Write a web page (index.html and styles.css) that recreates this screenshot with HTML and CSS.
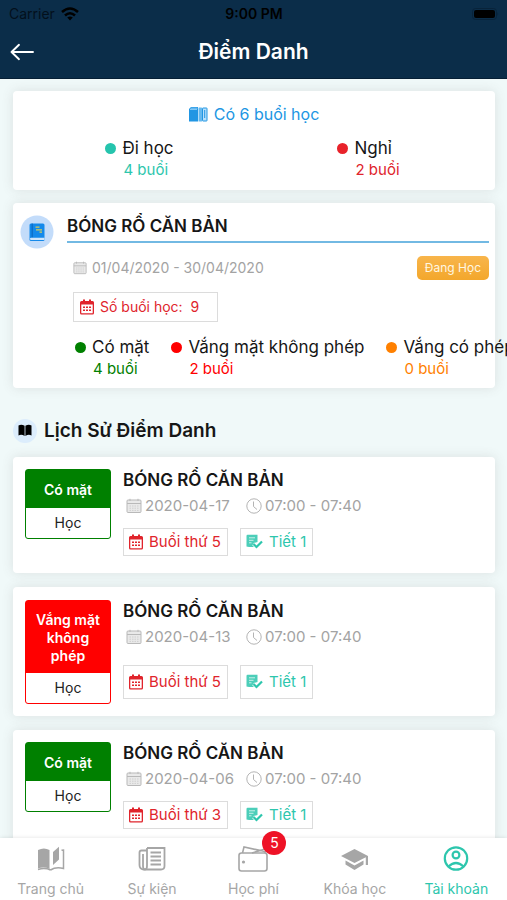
FILE: index.html
```html
<!DOCTYPE html>
<html lang="vi">
<head>
<meta charset="utf-8">
<meta name="viewport" content="width=device-width, initial-scale=1">
<title>Điểm Danh</title>
<link rel="stylesheet" href="styles.css">
</head>
<body>
<svg class="sprite" aria-hidden="true">
  <symbol id="calendar" viewBox="0 0 16 16">
    <rect x="1" y="2" width="14" height="12.500" rx="1" fill="#e9e9e9" stroke="#b9b9b9"/>
    <path d="M1 5.500H15" stroke="#b9b9b9"/>
    <path d="M4 .8V3M12 .8V3" stroke="#b9b9b9"/>
    <path d="M3.500 8H13M3.500 10.200H13M3.500 12.400H13" stroke="#cfcfcf" stroke-dasharray="1.500 1"/>
  </symbol>
  <symbol id="clock" viewBox="0 0 16 16">
    <circle cx="8" cy="8" r="7.200" fill="none" stroke="#b4b4b4"/>
    <path d="M7.500 3.500V8.500L11 11.500" fill="none" stroke="#b4b4b4"/>
  </symbol>
  <symbol id="sessions" viewBox="0 0 14 16">
    <path fill="currentColor" fill-rule="evenodd" d="M1.500 2H3V.5H5V2H9V.5H11V2H12.500Q14 2 14 3.500V14Q14 15.500 12.500 15.500H1.500Q0 15.500 0 14V3.500Q0 2 1.500 2ZM1.300 5.500V13.700Q1.300 14.200 1.800 14.200H12.200Q12.700 14.200 12.700 13.700V5.500Z"/>
    <path stroke="currentColor" stroke-width="1.600" stroke-dasharray="2 1" d="M3 8.300H11M3 11.300H11"/>
  </symbol>
  <symbol id="lesson" viewBox="0 0 17 16">
    <path fill="currentColor" d="M1.500 .8H11.500V8L7.500 9L9 13H3L.5 12.500V2Q.5 .8 1.500 .8Z" opacity=".85"/>
    <path d="M3 3.800H9M3 6.300H7.500M3 8.800H5.500" stroke="#fff" stroke-width=".7"/>
    <path d="M7.500 10L10.500 13L16 7.500" fill="none" stroke="#fff" stroke-width="3.600"/>
    <path d="M7.500 10L10.500 13L16 7.500" fill="none" stroke="currentColor" stroke-width="2.200"/>
  </symbol>
</svg>

<header class="header">
  <div class="status">
    <span class="carrier">Carrier
      <svg width="18" height="14" viewBox="0 0 18 14"><g fill="none" stroke="#000" stroke-width="2.600"><path d="M1 5Q9-2 17 5"/><path d="M4 8.500Q9 4 14 8.500"/></g><path d="M6.200 10.600Q9 8.200 11.800 10.600L9 13.500Z"/></svg>
    </span>
    <span class="time">9:00 PM</span>
    <svg class="battery" width="27" height="12" viewBox="0 0 27 12"><rect x=".5" y=".5" width="24" height="11" rx="3" fill="none" stroke="#08233a"/><rect x="2" y="2" width="21" height="8" rx="2"/><path d="M25.500 4Q27 6 25.500 8Z" fill="#08233a"/></svg>
  </div>
  <div class="bar">
    <button class="back" type="button" aria-label="Quay lại"><svg width="24" height="18" viewBox="0 0 24 18"><path d="M23 9H1.500M9 1.800L1.500 9L9 16.200" fill="none" stroke="#fff" stroke-width="1.900" stroke-linecap="round" stroke-linejoin="round"/></svg></button>
    <h1>Điểm Danh</h1>
  </div>
</header>

<main class="content">
  <section class="card summary">
    <h2 class="summary-title">
      <svg width="19" height="15" viewBox="0 0 19 15"><path d="M0 2L2 0H9V14.500H0Z" fill="#2196e3"/><path d="M1 2.500H8M1.500 1.200H8.500" stroke="#9bd3fa" stroke-width=".8"/><rect x="9.500" y=".5" width="3.500" height="14" rx=".5" fill="#65b9ef"/><rect x="13.500" y="1" width="4.500" height="13" rx=".5" fill="#b9e0fb" stroke="#2196e3"/><path d="M15.700 3V11" stroke="#2196e3"/></svg>
      Có 6 buổi học
    </h2>
    <div class="halves">
      <div class="stat teal"><span class="label">Đi học</span><span class="count">4 buổi</span></div>
      <div class="stat crimson"><span class="label">Nghỉ</span><span class="count">2 buổi</span></div>
    </div>
  </section>

  <section class="card course">
    <svg class="course-icon" width="34" height="34" viewBox="0 0 34 34"><circle cx="17" cy="17" r="16.500" fill="#c3dcfa"/><rect x="9.500" y="8.500" width="15" height="17.500" rx="1.500" fill="#1489ea"/><path d="M12.200 8.500V22.500" stroke="#0b66bb"/><path d="M11 22.700H24.500V25H11Q9.800 24.600 9.800 23.800Q9.800 23 11 22.700Z" fill="#cfe5fb"/><path d="M15.500 12.200H19.500M16 14.800H22M19.500 17.200H22" stroke="#d5cd58" stroke-width="1.300"/></svg>
    <div class="course-body">
      <h2 class="course-name ruled">BÓNG RỔ CĂN BẢN</h2>
      <div class="course-info">
        <div class="dates"><span class="meta range"><svg width="14" height="14"><use href="#calendar"/></svg>01/04/2020 - 30/04/2020</span><span class="pill">Đang Học</span></div>
        <div class="total"><svg width="14" height="16"><use href="#sessions"/></svg>Số buổi học:&nbsp; 9</div>
        <div class="breakdown">
          <div class="stat green"><span class="label">Có mặt</span><span class="count">4 buổi</span></div>
          <div class="stat red"><span class="label">Vắng mặt không phép</span><span class="count">2 buổi</span></div>
          <div class="stat orange"><span class="label">Vắng có phép</span><span class="count">0 buổi</span></div>
        </div>
      </div>
    </div>
  </section>

  <h2 class="history-title">
    <svg width="24" height="24" viewBox="0 0 24 24"><circle cx="12" cy="12" r="12" fill="#dcedfc"/><path d="M5.500 6.500Q8.500 5 11.600 6.800V17Q8.500 15 5.500 16.500ZM12.400 6.800Q15.500 5 18.500 6.500V16.500Q15.500 15 12.400 17Z"/></svg>
    Lịch Sử Điểm Danh
  </h2>

  <article class="card entry">
    <div class="mark present"><strong>Có mặt</strong><span>Học</span></div>
    <div class="entry-body">
      <h3 class="course-name">BÓNG RỔ CĂN BẢN</h3>
      <div class="when"><span class="meta"><svg width="16" height="16"><use href="#calendar"/></svg>2020-04-17</span><span class="meta"><svg width="16" height="16"><use href="#clock"/></svg>07:00 - 07:40</span></div>
      <div class="chips"><span class="chip crimson"><svg width="14" height="16"><use href="#sessions"/></svg>Buổi thứ 5</span><span class="chip teal"><svg width="17" height="16"><use href="#lesson"/></svg>Tiết 1</span></div>
    </div>
  </article>

  <article class="card entry tall">
    <div class="mark absent"><strong>Vắng mặt không phép</strong><span>Học</span></div>
    <div class="entry-body">
      <h3 class="course-name">BÓNG RỔ CĂN BẢN</h3>
      <div class="when"><span class="meta"><svg width="16" height="16"><use href="#calendar"/></svg>2020-04-13</span><span class="meta"><svg width="16" height="16"><use href="#clock"/></svg>07:00 - 07:40</span></div>
      <div class="chips"><span class="chip crimson"><svg width="14" height="16"><use href="#sessions"/></svg>Buổi thứ 5</span><span class="chip teal"><svg width="17" height="16"><use href="#lesson"/></svg>Tiết 1</span></div>
    </div>
  </article>

  <article class="card entry">
    <div class="mark present"><strong>Có mặt</strong><span>Học</span></div>
    <div class="entry-body">
      <h3 class="course-name">BÓNG RỔ CĂN BẢN</h3>
      <div class="when"><span class="meta"><svg width="16" height="16"><use href="#calendar"/></svg>2020-04-06</span><span class="meta"><svg width="16" height="16"><use href="#clock"/></svg>07:00 - 07:40</span></div>
      <div class="chips"><span class="chip crimson"><svg width="14" height="16"><use href="#sessions"/></svg>Buổi thứ 3</span><span class="chip teal"><svg width="17" height="16"><use href="#lesson"/></svg>Tiết 1</span></div>
    </div>
  </article>
</main>

<nav class="tabs">
  <a href="#home"><svg width="30" height="26" viewBox="0 0 30 26"><path d="M2 4Q8 1 13.500 4V23Q8 20.500 2 22.500Z" fill="#a6a6a6"/><path d="M14.500 24Q20 20.500 27.500 22.500V4L25.500 4.300M2 23.500Q9 21.500 14.500 24" fill="none" stroke="#a6a6a6" stroke-width="1.500"/><path d="M17 6L23 .8V13.500L17 19Z" fill="#a6a6a6"/></svg>Trang chủ</a>
  <a href="#events"><svg width="30" height="26" viewBox="0 0 30 26"><g fill="none" stroke="#a6a6a6" stroke-width="1.800"><path d="M10 2H27.500V20Q27.500 23.500 24 23.500H6.500Q2.500 23 2.500 19V6.500Q2.500 4.500 4.500 4.500H10"/><path d="M10 2V20Q10 23.500 8 23.500Q6 23.500 6 20V8"/><path d="M13.500 6.500H24M13.500 10.500H24M13.500 14.500H24M13.500 18.500H24"/></g></svg>Sự kiện</a>
  <a href="#fees"><span class="with-badge"><svg width="30" height="26" viewBox="0 0 30 26"><g fill="none" stroke="#a6a6a6" stroke-width="1.600"><rect x="1" y="7" width="28" height="18" rx="2.500"/><path d="M4.500 7L6 1L27 5.500V7M14 7L27 3"/></g><circle cx="5.500" cy="16" r="1.600" fill="#a6a6a6"/></svg><span class="badge">5</span></span>Học phí</a>
  <a href="#courses"><svg width="30" height="26" viewBox="0 0 30 26"><path d="M1 10L14.500 3L28 10V19H25.800V11.200L14.500 17ZM5.500 14.500V18.500L14.500 24L23.500 18.500V14.500L14.500 19.500Z" fill="#a6a6a6"/></svg>Khóa học</a>
  <a class="active" href="#account" aria-current="page"><svg width="30" height="26" viewBox="0 0 30 26"><g fill="none" stroke="#2dc6ad" stroke-width="2.200"><circle cx="15" cy="12.500" r="11.200"/><circle cx="15" cy="9" r="3.400"/><path d="M7.500 20.500Q15 13.500 22.500 20.500"/></g></svg>Tài khoản</a>
</nav>
</body>
</html>
```
FILE: styles.css
```css
* {
  box-sizing: border-box;
}

body {
  margin: 0;
  height: 100vh;
  display: flex;
  flex-direction: column;
  overflow: hidden;
  background: #f0f9f9;
  color: #161616;
  font-family: Inter, "Liberation Sans", sans-serif;
  font-size: 15px;
  line-height: 20px;
}

h1, h2, h3 {
  margin: 0;
}

svg {
  flex: none;
}

.sprite {
  position: absolute;
  width: 0;
  height: 0;
}

.header {
  flex: none;
  background: #0b2d49;
  border-bottom: 1px solid #061f35;
}

.status {
  display: grid;
  grid-template-columns: 1fr auto 1fr;
  align-items: center;
  height: 27px;
  padding: 0 8px 0 9px;
  color: #000;
  font-size: 14px;
}

.carrier {
  display: flex;
  align-items: center;
  gap: 6px;
  color: #03101c;
}

.time {
  font-weight: 600;
}

.battery {
  justify-self: end;
}

.bar {
  display: grid;
  grid-template-columns: 44px 1fr 44px;
  align-items: center;
  height: 51px;
  padding-bottom: 2px;
  color: #fff;
}

.back {
  display: flex;
  padding: 0 0 0 10px;
  border: 0;
  background: none;
}

h1 {
  text-align: center;
  font-size: 21px;
  font-weight: 600;
  line-height: 24px;
}

.content {
  flex: 1;
  min-height: 0;
  padding: 12px 12px 0 13px;
  overflow-x: hidden;
  overflow-y: auto;
  scrollbar-width: none;
}

.card {
  margin-bottom: 14px;
  border-radius: 4px;
  background: #fff;
  box-shadow: 0 0 12px rgba(90, 80, 80, 0.14);
}

.summary {
  margin-bottom: 13px;
  padding: 12px 0 9px;
}

.summary-title {
  display: flex;
  justify-content: center;
  align-items: center;
  gap: 6px;
  color: #2196e3;
  font-size: 16px;
  font-weight: 400;
  line-height: 22px;
}

.halves {
  display: grid;
  grid-template-columns: 1fr 1fr;
  justify-items: center;
  margin-top: 12px;
  padding: 0 12px;
}

.label {
  display: flex;
  align-items: center;
  gap: 6px;
  color: #161616;
  font-size: 17px;
  line-height: 22px;
}

.label::before {
  width: 11px;
  height: 11px;
  border-radius: 50%;
  background: currentColor;
  content: "";
}

.count {
  display: block;
  margin-left: 18px;
  line-height: 22px;
}

.teal { color: #2dc6ad; }
.crimson { color: #e0242c; }
.green { color: #008000; }
.red { color: #ff0000; }
.orange { color: #ff8000; }

.teal .label::before { background: #25c4ad; }
.crimson .label::before { background: #e8222a; }
.green .label::before { background: #008000; }
.red .label::before { background: #ff0000; }
.orange .label::before { background: #ff8000; }

.course {
  display: flex;
  gap: 13px;
  padding: 12px 6px 8px 7px;
}

.course-body {
  flex: 1;
  min-width: 0;
}

.course-name {
  color: #161616;
  font-size: 17px;
  font-weight: 600;
  line-height: 22px;
}

.course-name.ruled {
  padding-bottom: 4px;
  border-bottom: 2px solid #72b9e3;
}

.course-info {
  padding-left: 6px;
}

.dates {
  display: flex;
  justify-content: space-between;
  align-items: center;
  margin-top: 13px;
}

.meta {
  display: flex;
  align-items: center;
  gap: 3px;
  color: #a3a3a3;
}

.range {
  gap: 5px;
  font-size: 14px;
}

.pill {
  padding: 2px 8px;
  border-radius: 5px;
  background: linear-gradient(#f8b54b, #f3a72c);
  color: #fff7e2;
  font-size: 12px;
}

.total {
  display: flex;
  align-items: center;
  gap: 6px;
  width: fit-content;
  margin-top: 12px;
  padding: 4px 18px 4px 6px;
  border: 1px solid #dcdcdc;
  color: #e0242c;
  font-size: 14px;
}

.breakdown {
  display: flex;
  gap: 22px;
  margin-top: 14px;
  padding-left: 2px;
  white-space: nowrap;
}

.history-title {
  display: flex;
  align-items: center;
  gap: 7px;
  margin: 30px 0 13px;
  font-size: 19px;
  font-weight: 600;
  line-height: 26px;
}

.entry {
  display: flex;
  align-items: flex-start;
  gap: 12px;
  min-height: 116px;
  padding: 12px;
}

.mark {
  flex: none;
  width: 86px;
  border: 1px solid;
  border-radius: 3px;
  text-align: center;
}

.mark strong {
  display: block;
  padding: 11px 4px 9px;
  color: #fff;
  font-size: 14px;
  font-weight: 600;
  line-height: 18px;
}

.mark span {
  display: block;
  padding: 5px 0;
  color: #222;
  font-size: 14px;
}

.present { border-color: #008000; }
.present strong { background: #008000; }
.absent { border-color: #ff0000; }
.absent strong { background: #ff0000; }

.when {
  display: grid;
  grid-template-columns: 110px auto;
  gap: 10px;
  margin-top: 5px;
  padding-left: 3px;
}

.chips {
  display: flex;
  gap: 12px;
  margin-top: 12px;
}

.chip {
  display: flex;
  align-items: center;
  gap: 6px;
  padding: 3px 6px 3px 5px;
  border: 1px solid #dcdcdc;
}

.tall {
  padding-top: 13px;
}

.tall .mark strong {
  padding: 10px 4px 8px;
}

.tall .chips {
  margin-top: 18px;
}

.tall .chip {
  padding-top: 6px;
  padding-bottom: 6px;
}

.tabs {
  flex: none;
  display: grid;
  grid-template-columns: repeat(5, 1fr);
  height: 62px;
  padding-top: 8px;
  background: #fff;
  box-shadow: 0 0 4px rgba(0, 0, 0, 0.12);
  z-index: 1;
}

.tabs a {
  display: flex;
  flex-direction: column;
  align-items: center;
  gap: 7px;
  color: #a6a6a6;
  font-size: 14px;
  text-decoration: none;
}

.tabs .active {
  color: #2dc6ad;
}

.with-badge {
  position: relative;
  display: flex;
}

.badge {
  position: absolute;
  top: -15px;
  right: -18px;
  width: 24px;
  height: 24px;
  border-radius: 50%;
  background: #ee1226;
  color: #fff;
  line-height: 24px;
  text-align: center;
}
```
